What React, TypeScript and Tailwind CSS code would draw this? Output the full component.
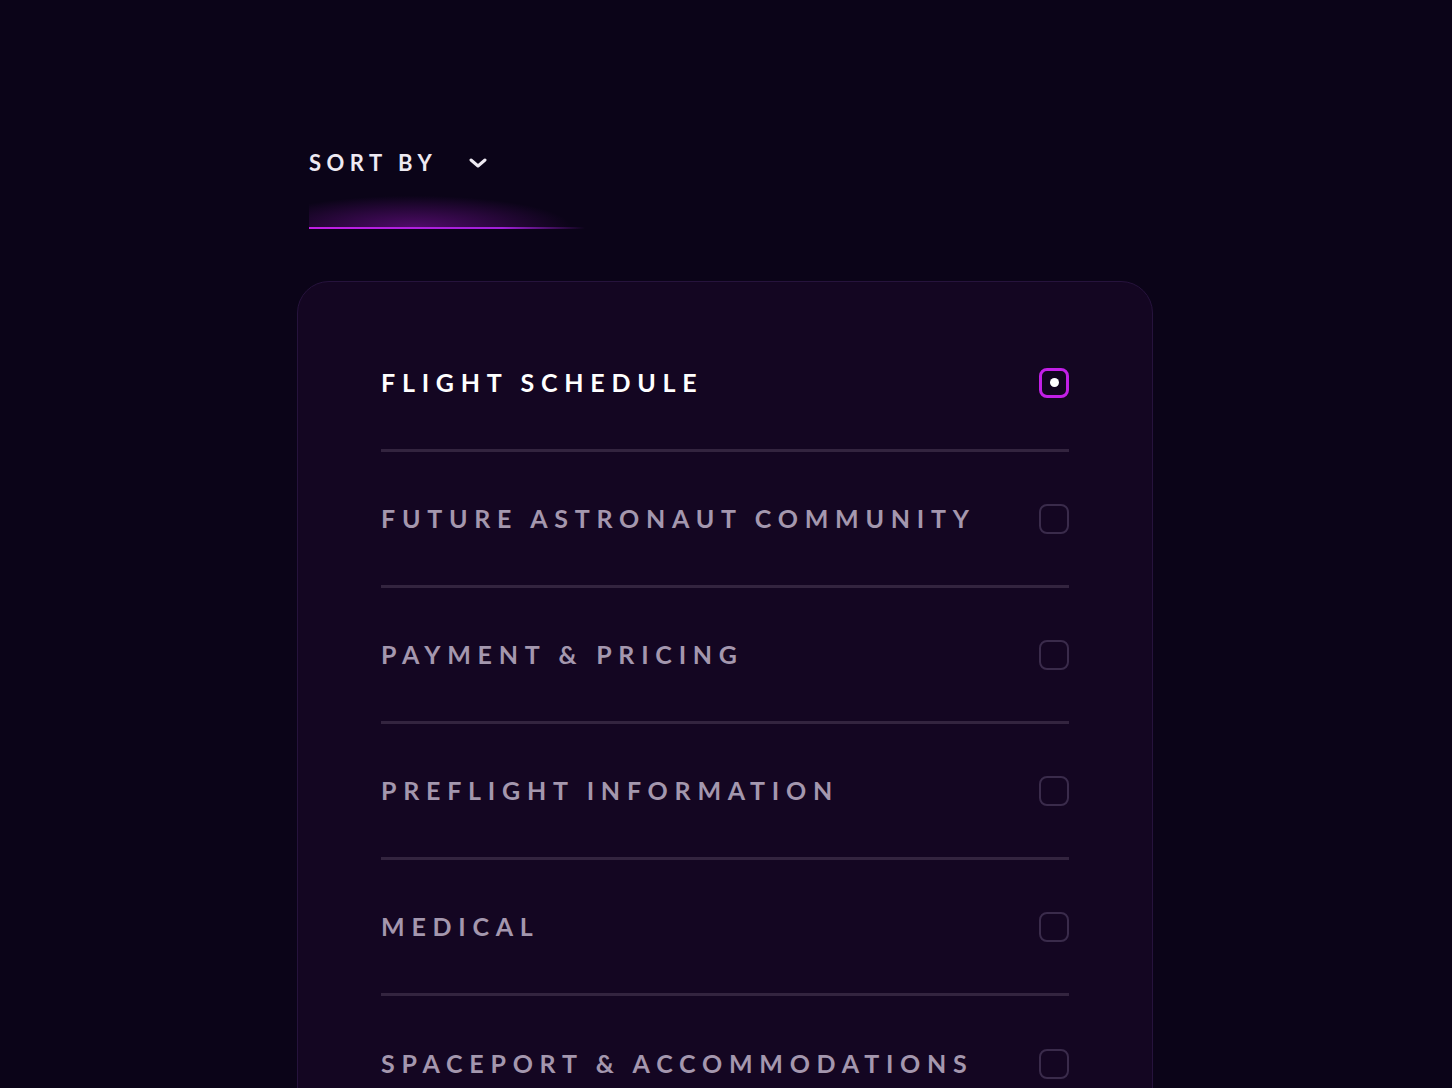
import React from "react";

const items = [
  { label: "FLIGHT SCHEDULE", active: true },
  { label: "FUTURE ASTRONAUT COMMUNITY", active: false },
  { label: "PAYMENT & PRICING", active: false },
  { label: "PREFLIGHT INFORMATION", active: false },
  { label: "MEDICAL", active: false },
  { label: "SPACEPORT & ACCOMMODATIONS", active: false },
];

function Check(props: { active: boolean }) {
  if (props.active) {
    return (
      <span className="flex h-[30px] w-[30px] items-center justify-center rounded-[8px] border-[3px] border-[#c21fe6] bg-[#12051f]">
        <span className="h-[9px] w-[9px] rounded-full bg-white" />
      </span>
    );
  }
  return <span className="h-[30px] w-[30px] rounded-[8px] border-[2px] border-[#3a2b4b]" />;
}

export default function App() {
  return (
    <div
      className="h-[1088px] overflow-hidden bg-[#0b0418] pl-[297px] pt-[146px]"
      style={{ fontFamily: "Lato, 'Noto Sans', sans-serif" }}
    >
      <div className="ml-[12px] w-[276px]">
        <button className="flex items-center gap-[32px] text-[22px] font-bold tracking-[0.25em] text-[#eeeaf2]">
          SORT BY
          <svg width="18" height="12" viewBox="0 0 18 12" fill="none">
            <path d="M2 3l7 6 7-6" stroke="#eeeaf2" strokeWidth="3" strokeLinecap="round" strokeLinejoin="round" />
          </svg>
        </button>
        <div className="mt-[14px] h-[34px] bg-[radial-gradient(ellipse_at_38%_100%,rgba(160,20,200,0.45),transparent_65%)]" />
        <div className="h-[2px] bg-gradient-to-r from-[#c21fe6] via-[#a020d8] via-70% to-transparent" />
      </div>
      <div className="mt-[52px] h-[900px] w-[856px] rounded-[32px] border border-[#26133c] bg-[#140622] px-[83px] pt-[34px]">
        {items.map((it, i) => (
          <div
            key={it.label}
            className={
              "flex h-[136px] items-center justify-between " +
              (i < items.length - 1 ? "border-b-[3px] border-[#33243f]" : "")
            }
          >
            <span
              className={
                "text-[25px] font-bold tracking-[0.27em] " +
                (it.active ? "text-white" : "text-[#a497ae]")
              }
            >
              {it.label}
            </span>
            <Check active={it.active} />
          </div>
        ))}
      </div>
    </div>
  );
}
